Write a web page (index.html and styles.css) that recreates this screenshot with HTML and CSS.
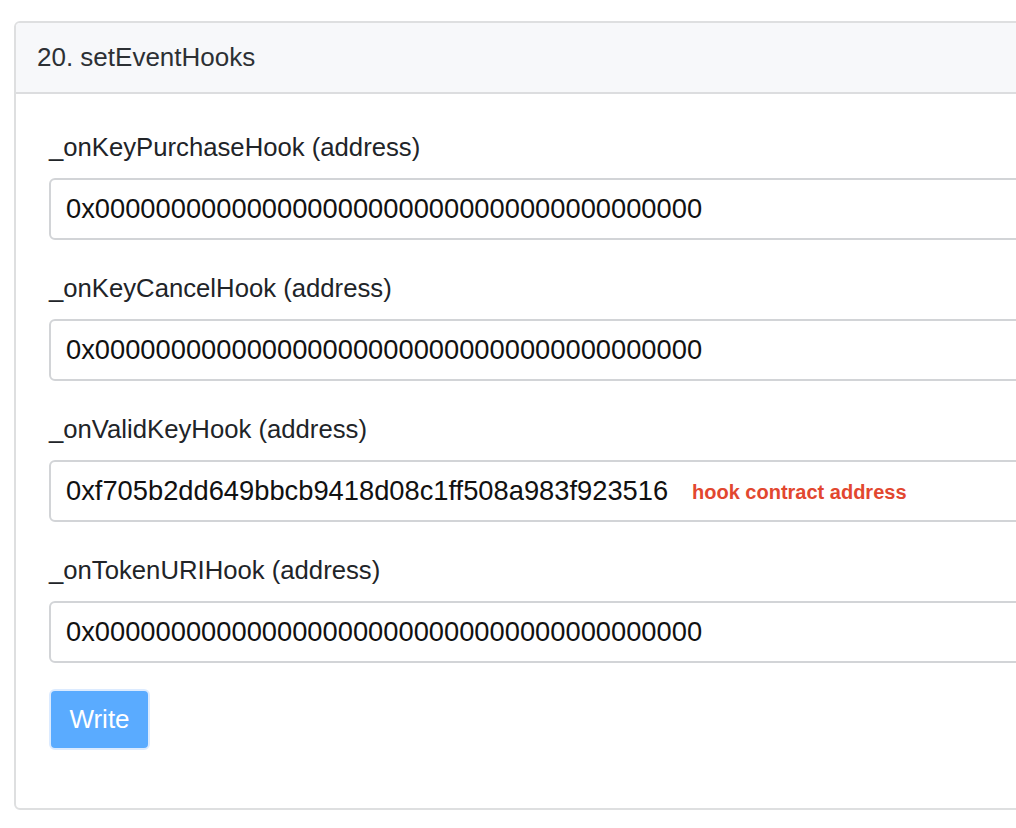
FILE: index.html
```html
<!DOCTYPE html>
<html lang="en">
<head>
<meta charset="utf-8">
<title>setEventHooks</title>
<link rel="stylesheet" href="styles.css">
</head>
<body>
<div class="page">
  <div class="card">
    <div class="card-header">20. setEventHooks</div>
    <div class="card-body">
      <div class="fields">
        <div class="field">
          <label class="label">_onKeyPurchaseHook (address)</label>
          <input class="input" type="text" value="0x0000000000000000000000000000000000000000">
        </div>
        <div class="field">
          <label class="label">_onKeyCancelHook (address)</label>
          <input class="input" type="text" value="0x0000000000000000000000000000000000000000">
        </div>
        <div class="field">
          <label class="label">_onValidKeyHook (address)</label>
          <div class="input-wrap">
            <input class="input" type="text" value="0xf705b2dd649bbcb9418d08c1ff508a983f923516">
            <span class="note">hook contract address</span>
          </div>
        </div>
        <div class="field">
          <label class="label">_onTokenURIHook (address)</label>
          <input class="input" type="text" value="0x0000000000000000000000000000000000000000">
        </div>
      </div>
      <div class="actions">
        <button class="btn" type="button">Write</button>
      </div>
    </div>
  </div>
</div>
</body>
</html>
```
FILE: styles.css
```css
html, body {
  margin: 0;
  padding: 0;
  background: #ffffff;
  overflow: hidden;
}
.page {
  padding: 21px 0 0 14px;
  font-family: "Liberation Sans", Arial, Helvetica, sans-serif;
}
.card {
  width: 1060px;
  border: 2px solid #dedfe0;
  border-radius: 6px;
  background: #fff;
}
.card-header {
  height: 69px;
  line-height: 69px;
  padding: 0 21px;
  background: #f7f8fa;
  border-bottom: 2px solid #dcdddf;
  border-radius: 4px 4px 0 0;
  font-size: 26px;
  color: #2c3034;
}
.card-body {
  padding: 35px 33px 58px 33px;
}
.fields {
  display: flex;
  flex-direction: column;
  gap: 30px;
}
.field {
  display: flex;
  flex-direction: column;
}
.label {
  font-size: 25.7px;
  line-height: 36px;
  color: #212428;
  margin-bottom: 13px;
}
.input-wrap {
  position: relative;
}
.input {
  display: block;
  box-sizing: border-box;
  width: 100%;
  height: 62px;
  border: 2px solid #d2d4d7;
  border-radius: 6px;
  padding: 0 15px;
  font-family: "Liberation Sans", Arial, Helvetica, sans-serif;
  font-size: 27.3px;
  color: #111;
  background: #fff;
  outline: none;
}
.note {
  position: absolute;
  left: 643px;
  top: 1px;
  line-height: 62px;
  font-size: 20px;
  font-weight: bold;
  color: #e2472f;
}
.actions {
  margin-top: 26px;
}
.btn {
  width: 101px;
  height: 61px;
  box-sizing: border-box;
  background: #5aabff;
  border: 2px solid #dcebff;
  border-radius: 6px;
  color: #fff;
  font-family: "Liberation Sans", Arial, Helvetica, sans-serif;
  font-size: 26px;
  padding: 0;
}
```
